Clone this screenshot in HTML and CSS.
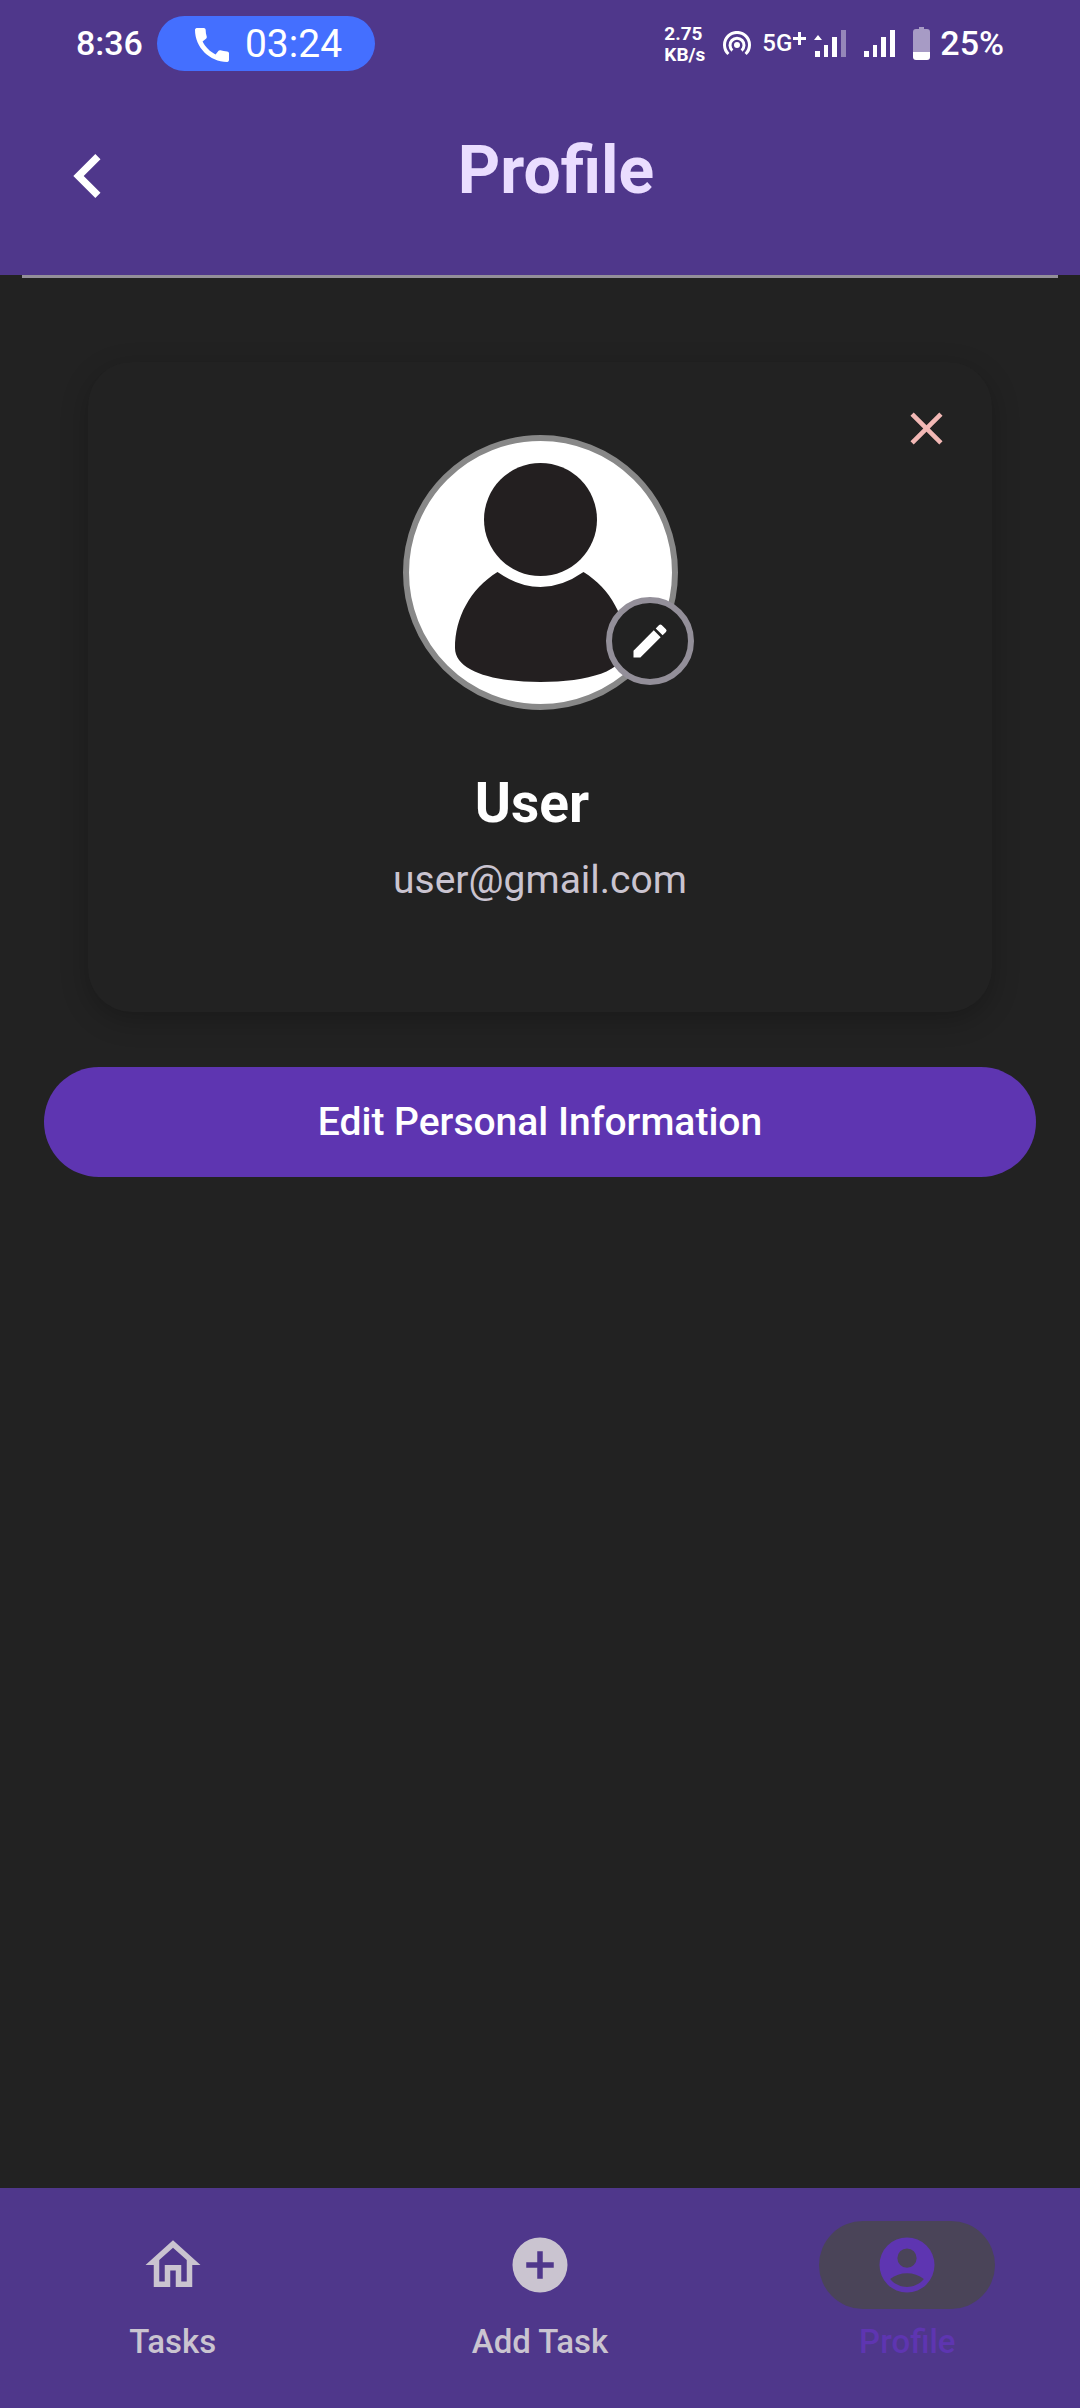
FILE: index.html
```html
<!DOCTYPE html>
<html lang="en">
<head>
<meta charset="utf-8">
<meta name="viewport" content="width=device-width, initial-scale=1">
<title>Profile</title>
<link rel="stylesheet" href="styles.css">
</head>
<body>
<div class="app">
  <header class="top">
    <div class="status">
      <span class="clock">8:36</span>
      <span class="call">
        <svg class="call-icon" viewBox="3 3 18 18" aria-hidden="true"><path d="M20.01 15.38c-1.23 0-2.42-.2-3.53-.56-.35-.12-.74-.03-1.01.24l-1.57 1.97c-2.83-1.35-5.48-3.9-6.89-6.83l1.95-1.66c.27-.28.35-.67.24-1.02-.37-1.11-.56-2.3-.56-3.53 0-.54-.45-.99-.99-.99H4.19C3.65 3 3 3.24 3 3.99 3 13.28 10.73 21 20.01 21c.71 0 .99-.63.99-1.18v-3.45c0-.54-.45-.99-.99-.99z"/></svg>
        <span>03:24</span>
      </span>
      <div class="indicators">
        <span class="speed">2.75<br>KB/s</span>
        <svg class="hotspot" viewBox="0 0 28 26" aria-hidden="true"><g fill="none" stroke="currentColor" stroke-width="3"><path d="M5.400 23A12.500 12.500 0 1 1 22.600 23"/><path d="M9.400 19.500A7 7 0 1 1 18.600 19.500"/></g><circle cx="14" cy="14" r="3" fill="currentColor"/></svg>
        <span class="network">5G<svg class="plus" viewBox="0 0 13 13" aria-hidden="true"><path d="M5 0h3v5h5v3H8v5H5V8H0V5h5z"/></svg></span>
        <svg class="signal" viewBox="0 0 32 28" aria-hidden="true"><path d="M0 10l4-5 4 5zM1 21h5v6H1zM10 15h4v12h-4zM18 7h5v20h-5z"/><path opacity=".4" d="M27 0h5v27h-5z"/></svg>
        <svg class="signal signal-two" viewBox="0 0 32 28" aria-hidden="true"><path d="M1 21h5v6H1zM10 15h4v12h-4zM18 7h5v20h-5zM27 0h5v27h-5z"/></svg>
        <svg class="battery" viewBox="0 0 17 33" aria-hidden="true"><path opacity=".5" d="M6 0h5v2h3q3 0 3 3v20H0V5q0-3 3-3h3z"/><path d="M0 25h17v5q0 3-3 3H3q-3 0-3-3z"/></svg>
        <span class="percent">25%</span>
      </div>
    </div>
    <div class="bar">
      <button class="back" type="button" aria-label="Back"><svg viewBox="0 0 24 24" aria-hidden="true"><path d="M15.410 16.590L10.830 12l4.580-4.590L14 6l-6 6 6 6z"/></svg></button>
      <h1 class="title">Profile</h1>
    </div>
  </header>
  <main class="content">
    <hr class="divider">
    <section class="card">
      <button class="close" type="button" aria-label="Close"><svg viewBox="0 0 24 24" aria-hidden="true"><path d="M19 6.410L17.590 5 12 10.590 6.410 5 5 6.410 10.590 12 5 17.590 6.410 19 12 13.410 17.590 19 19 17.590 13.410 12z"/></svg></button>
      <div class="avatar">
        <svg class="photo" viewBox="0 0 275 275" role="img" aria-label="Profile picture"><circle cx="137.500" cy="137.500" r="134.500" fill="#fff" stroke="#888" stroke-width="6"/><g fill="#231f20"><circle cx="137.500" cy="84.500" r="56.500"/><path d="M94.500 137Q137.500 167 180.500 137C208 154 223 183 223 213C223 236 185 247 137.500 247C90 247 52 236 52 213C52 183 67 154 94.500 137z"/></g></svg>
        <button class="edit-photo" type="button" aria-label="Change picture"><svg viewBox="0 0 24 24" aria-hidden="true"><path d="M3 17.250V21h3.750L17.810 9.940l-3.750-3.750zM20.710 7.040a1 1 0 0 0 0-1.410l-2.340-2.340a1 1 0 0 0-1.410 0l-1.830 1.830 3.750 3.750z"/></svg></button>
      </div>
      <h2 class="name">User</h2>
      <p class="email">user@gmail.com</p>
    </section>
    <button class="primary" type="button">Edit Personal Information</button>
  </main>
  <nav class="tabs">
    <a class="tab" href="#tasks"><span class="tab-icon"><svg viewBox="0 0 24 24" aria-hidden="true"><path d="M12 5.690l5 4.500V18h-2v-6H9v6H7v-7.810l5-4.500M12 3L2 12h3v8h6v-6h2v6h6v-8h3z"/></svg></span>Tasks</a>
    <a class="tab" href="#add"><span class="tab-icon"><svg viewBox="0 0 24 24" aria-hidden="true"><path d="M12 2a10 10 0 1 0 0 20 10 10 0 0 0 0-20zm5 11h-4v4h-2v-4H7v-2h4V7h2v4h4z"/></svg></span>Add Task</a>
    <a class="tab tab-active" href="#profile" aria-current="page"><span class="tab-icon"><svg viewBox="0 0 24 24" aria-hidden="true"><path fill-rule="evenodd" d="M12 2a10 10 0 1 0 0 20 10 10 0 0 0 0-20zm0 4a3.500 3.500 0 1 1 0 7 3.500 3.500 0 0 1 0-7zm0 14c-2.030 0-4.430-.82-6.140-2.880a9.950 9.950 0 0 1 12.280 0C16.430 19.180 14.030 20 12 20z"/></svg></span>Profile</a>
  </nav>
</div>
</body>
</html>
```
FILE: styles.css
```css
:root {
  --purple: #4f378b;
  --accent: #5e35b1;
  --surface: #222222;
  --outline: #938f99;
  --muted: #cac4d0;
}

* {
  box-sizing: border-box;
}

body {
  margin: 0;
  background: var(--surface);
  color: #fff;
  font-family: Roboto, "Noto Sans", sans-serif;
}

button {
  display: flex;
  align-items: center;
  justify-content: center;
  padding: 0;
  border: 0;
  background: none;
  color: inherit;
  font: inherit;
}

svg {
  display: block;
  fill: currentColor;
}

.app {
  display: flex;
  flex-direction: column;
  min-height: 100vh;
}

.top {
  padding-bottom: 55px;
  background: var(--purple);
}

.status {
  display: flex;
  align-items: center;
  padding: 16px 76px 0;
  font-size: 34px;
  font-weight: 500;
  line-height: 55px;
}

.call {
  display: flex;
  align-items: center;
  gap: 16px;
  margin-left: 14px;
  padding: 2px 33px 0 38px;
  border-radius: 28px;
  background: #446fff;
  font-size: 39px;
  font-weight: 400;
  line-height: 53px;
}

.call-icon {
  width: 34px;
  height: 34px;
}

.indicators {
  display: flex;
  align-items: center;
  margin-left: auto;
}

.speed {
  font-size: 19px;
  font-weight: 700;
  line-height: 21px;
}

.hotspot {
  width: 28px;
  height: 26px;
  margin: 0 11px 0 18px;
}

.network {
  display: flex;
  align-items: center;
  gap: 1px;
  font-size: 24px;
}

.plus {
  width: 13px;
  height: 13px;
  margin-bottom: 10px;
}

.signal {
  width: 32px;
  height: 28px;
  margin-left: 8px;
}

.signal-two {
  margin: 0 18px 0 17px;
}

.battery {
  width: 17px;
  height: 33px;
  margin-right: 10px;
}

.bar {
  display: grid;
  grid-template-columns: 88px 1fr 56px;
  align-items: center;
  padding: 61px 44px 0;
}

.back svg {
  width: 88px;
  height: 88px;
}

.title {
  margin: 0;
  padding-bottom: 10px;
  color: #eaddff;
  font-size: 66px;
  font-weight: 700;
  line-height: 76px;
  text-align: center;
}

.content {
  flex: 1;
  padding-bottom: 55px;
}

.divider {
  height: 3px;
  margin: 0 22px;
  border: 0;
  background: var(--outline);
}

.card {
  position: relative;
  display: flex;
  flex-direction: column;
  align-items: center;
  margin: 84px 88px 55px;
  padding: 73px 44px 104px;
  border-radius: 44px;
  box-shadow: 0 8px 28px rgba(0, 0, 0, 0.24);
  background: var(--surface);
}

.close {
  position: absolute;
  top: 22px;
  right: 22px;
  width: 88px;
  height: 88px;
  color: #f2b8b5;
}

.close svg {
  width: 55px;
  height: 55px;
}

.avatar {
  position: relative;
}

.photo {
  width: 275px;
  height: 275px;
}

.edit-photo {
  position: absolute;
  right: -16px;
  bottom: 25px;
  width: 88px;
  height: 88px;
  border: 6px solid var(--outline);
  border-radius: 50%;
  background: var(--surface);
}

.edit-photo svg {
  width: 44px;
  height: 44px;
}

.name {
  margin: 55px 0 0;
  padding-right: 16px;
  font-size: 55px;
  font-weight: 700;
  line-height: 76px;
}

.email {
  margin: 12px 0 0;
  color: var(--muted);
  font-size: 39px;
  line-height: 55px;
}

.primary {
  width: calc(100% - 88px);
  height: 110px;
  margin: 0 44px;
  border-radius: 55px;
  background: var(--accent);
  font-size: 39px;
  font-weight: 500;
}

.tabs {
  display: grid;
  grid-template-columns: repeat(3, 1fr);
  gap: 22px;
  padding: 33px 0 44px;
  background: var(--purple);
}

.tab {
  display: flex;
  flex-direction: column;
  align-items: center;
  gap: 11px;
  color: var(--muted);
  font-size: 33px;
  font-weight: 500;
  line-height: 44px;
  text-decoration: none;
}

.tab-icon {
  padding: 11px 55px;
  border-radius: 44px;
}

.tab-icon svg {
  width: 66px;
  height: 66px;
}

.tab-active {
  color: var(--accent);
}

.tab-active .tab-icon {
  background: #4a4458;
}
```
